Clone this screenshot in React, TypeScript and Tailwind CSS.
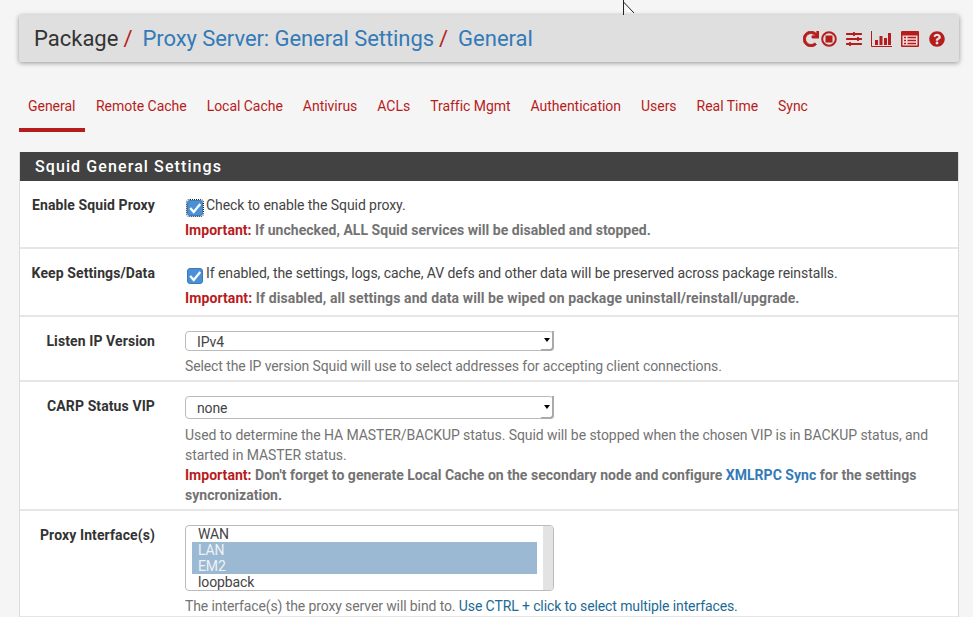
import { ReactNode } from "react";
import { FaRedo, FaSlidersH, FaQuestionCircle } from "react-icons/fa";

const tabs = ["General", "Remote Cache", "Local Cache", "Antivirus", "ACLs", "Traffic Mgmt", "Authentication", "Users", "Real Time", "Sync"];

const Check = ({ focused }: { focused?: boolean }) => (
    <span className={"relative inline-flex w-4 h-4 shrink-0 mt-[5px] ml-[2px] mr-[3px] items-center justify-center rounded-[3px] bg-[#4a90d6] border border-[#3a7ab8] " + (focused ? "outline-1 outline-dotted outline-[#222]" : "")}>
        <svg viewBox="0 0 16 16" className="w-4 h-4">
            <path d="M2.5 8 L6.5 12.5 L14 3.5" fill="none" stroke="#fff" strokeWidth="2.6" />
        </svg>
    </span>
);

const Row = ({ label, children, bottom }: { label: string; children: ReactNode; bottom: string }) => (
    <div className={"flex border-b-2 border-[#e6e6e6] pt-[14px] " + bottom}>
        <div className="w-[135px] shrink-0 text-right font-bold text-[#333] leading-5 tracking-[0.1px]">{label}</div>
        <div className="ml-[30px] w-[755px] leading-5 text-[#737373] tracking-[-0.11px]">{children}</div>
    </div>
);

const Dropdown = ({ value, h }: { value: string; h: string }) => (
    <div className={"relative w-[369px] " + h}>
        <select defaultValue={value} className={"appearance-none block w-full rounded-[4px] border border-[#bbb] bg-white pl-[11px] text-[14px] text-[#444] " + h}>
            <option>{value}</option>
        </select>
        <span className="absolute right-0 top-0 bottom-0 w-[13px] flex items-center justify-center border-r-2 border-b-2 border-[#aaa] rounded-br-[4px]">
            <span className="w-0 h-0 border-x-[3px] border-x-transparent border-t-[4px] border-t-black" />
        </span>
    </div>
);

const Important = ({ children, wide }: { children: ReactNode; wide?: boolean }) => (
    <div className={"font-bold mt-[4px] " + (wide ? "tracking-[0.1px]" : "tracking-[0.03px]")}>
        <span className="text-[#b71c1c]">Important:</span> {children}
    </div>
);

export default function App() {
    return (
        <div className="relative h-[617px] w-[973px] overflow-hidden bg-[#f5f5f5] font-['Roboto',sans-serif] text-[14px]">
            <svg viewBox="0 0 14 16" className="absolute left-[623px] top-0 w-[14px] h-4">
                <path d="M0.5 -6 V15 M0.5 2 L11 13" fill="none" stroke="#222" strokeWidth="1" />
                <path d="M2 6 L8 12 L4 12 Z" fill="#fff" />
            </svg>

            <div className="pt-[15px] pl-[19px]">
                <div className="flex items-center justify-between w-[940px] h-[47px] rounded-[2px] bg-[#dfdfdf] shadow-[0_1px_5px_rgba(0,0,0,0.4)] pl-[15px] pr-[14px]">
                    <div className="flex text-[22px] leading-none whitespace-nowrap">
                        <span className="text-[#333]">Package</span>
                        <span className="text-[#b71c1c] ml-[5px]">/</span>
                        <span className="text-[#337ab7] ml-[10px] tracking-[-0.07px]">Proxy Server: General Settings</span>
                        <span className="text-[#b71c1c] ml-[5px]">/</span>
                        <span className="text-[#337ab7] ml-[10px]">General</span>
                    </div>
                    <div className="flex items-center text-[#b71c1c]">
                        <FaRedo className="w-4 h-4 stroke-[30px]" stroke="currentColor" />
                        <svg viewBox="0 0 16 16" className="w-4 h-4 ml-[2px]">
                            <circle cx="8" cy="8" r="6.8" fill="none" stroke="currentColor" strokeWidth="2" />
                            <rect x="4.5" y="4.5" width="7" height="7" fill="currentColor" />
                        </svg>
                        <FaSlidersH className="w-4 h-4 ml-[9px]" />
                        <svg viewBox="0 0 21 16" className="w-[21px] h-4 ml-[9px]">
                            <path d="M0.5 0 V15.5 H21" fill="none" stroke="currentColor" strokeWidth="1" />
                            <rect x="4" y="9" width="3" height="5" fill="currentColor" />
                            <rect x="8.5" y="5" width="3" height="9" fill="currentColor" />
                            <rect x="13" y="7" width="3" height="7" fill="currentColor" />
                            <rect x="17" y="2" width="3" height="12" fill="currentColor" />
                        </svg>
                        <svg viewBox="0 0 18 16" className="w-[18px] h-4 ml-[9px]">
                            <rect x="0" y="0" width="18" height="16" rx="1" fill="currentColor" />
                            <rect x="1.5" y="4.5" width="15" height="10" fill="#efdcdc" />
                            <path d="M3 6.5 H5 M3 9.5 H5 M3 12.5 H5 M6.5 6.5 H15 M6.5 9.5 H15 M6.5 12.5 H15" stroke="currentColor" strokeWidth="1.3" />
                        </svg>
                        <FaQuestionCircle className="w-4 h-4 ml-[10px]" />
                    </div>
                </div>

                <div className="flex mt-[27px] h-[43px] text-[#b71c1c] leading-5 whitespace-nowrap tracking-[-0.03px]">
                    {tabs.map((t, i) => (
                        <a key={t} className={"px-[9px] mr-[2px] pt-[7px] h-[43px] " + (i === 0 ? "w-[66px] border-b-4 border-[#b71c1c]" : "")}>
                            {t}
                        </a>
                    ))}
                </div>

                <div className="mt-[20px] w-[940px] bg-white border-x border-[#dcdcdc]">
                    <h2 className="h-[29px] bg-[#424242] pl-[15px] text-white text-[16px] font-medium tracking-[1.1px] leading-[29px]">
                        Squid General Settings
                    </h2>
                    <Row label="Enable Squid Proxy" bottom="h-[68px]">
                        <div className="flex text-[#444] tracking-[-0.07px]">
                            <Check focused />
                            Check to enable the Squid proxy.
                        </div>
                        <Important>If unchecked, ALL Squid services will be disabled and stopped.</Important>
                    </Row>
                    <Row label="Keep Settings/Data" bottom="h-[68px]">
                        <div className="flex text-[#444] tracking-[-0.07px]">
                            <Check />
                            If enabled, the settings, logs, cache, AV defs and other data will be preserved across package reinstalls.
                        </div>
                        <Important wide>If disabled, all settings and data will be wiped on package uninstall/reinstall/upgrade.</Important>
                    </Row>
                    <Row label="Listen IP Version" bottom="h-[65px]">
                        <Dropdown value="IPv4" h="h-[20px]" />
                        <div className="mt-[5px]">Select the IP version Squid will use to select addresses for accepting client connections.</div>
                    </Row>
                    <Row label="CARP Status VIP" bottom="h-[129px]">
                        <Dropdown value="none" h="h-[23px]" />
                        <div className="mt-[6px] tracking-[-0.07px]">
                            Used to determine the HA MASTER/BACKUP status. Squid will be stopped when the chosen VIP is in BACKUP status, and started in MASTER status.
                        </div>
                        <div className="font-bold tracking-[0.03px]">
                            <span className="text-[#b71c1c]">Important:</span> Don't forget to generate Local Cache on the secondary node and configure <a className="text-[#337ab7]">XMLRPC Sync</a> for the settings syncronization.
                        </div>
                    </Row>
                    <Row label="Proxy Interface(s)" bottom="h-[107px]">
                        <div className="flex w-[369px] h-[66px] rounded-[4px] border border-[#bbb] bg-white overflow-hidden">
                            <ul className="flex-1 pl-[6px] pr-[6px] text-[14px] leading-[16px] text-[#444]">
                                <li className="pl-[6px]">WAN</li>
                                <li className="pl-[6px] bg-[#9bb9d3] text-[#eef3f7]">LAN</li>
                                <li className="pl-[6px] bg-[#9bb9d3] text-[#eef3f7]">EM2</li>
                                <li className="pl-[6px]">loopback</li>
                            </ul>
                            <div className="w-[10px] bg-[#e3e3e3]" />
                        </div>
                        <div className="mt-[5px]">
                            The interface(s) the proxy server will bind to. <span className="text-[#1b6a94]">Use CTRL + click to select multiple interfaces.</span>
                        </div>
                    </Row>
                </div>
            </div>
        </div>
    );
}
